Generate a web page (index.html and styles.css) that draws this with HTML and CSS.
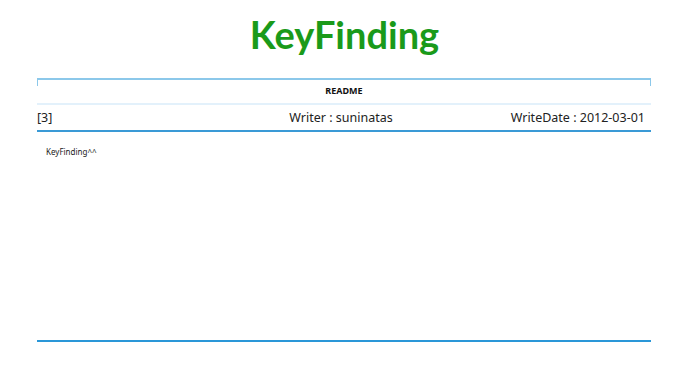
FILE: index.html
```html
<!DOCTYPE html>
<html lang="ko">
<head>
    <meta charset="UTF-8">
    <title>KeyFinding</title>
    <link rel="stylesheet" href="styles.css">
</head>
<body>
    <h1 class="title">KeyFinding</h1>
    <div class="board">
        <div class="board-head">README</div>
        <div class="board-info">
            <span class="num">[3]</span>
            <span class="writer">Writer : suninatas</span>
            <span class="date">WriteDate : 2012-03-01</span>
        </div>
        <div class="board-body">KeyFinding^^</div>
    </div>
</body>
</html>
```

FILE: styles.css
```css
body {
    margin: 0;
    font-family: "Noto Sans", "Noto Sans CJK KR", sans-serif;
    background: #fff;
    color: #222;
}

.title {
    margin: 0;
    padding: 9px 0 0 8px;
    height: 66px;
    text-align: center;
    font-family: Lato, sans-serif;
    font-weight: bold;
    font-size: 38px;
    line-height: 50px;
    color: #1a9a1a;
    box-sizing: border-box;
}

.board {
    width: 614px;
    margin: 12px 0 0 37px;
}

.board-head {
    height: 23px;
    border-top: 2px solid #8cc8ea;
    font-size: 9px;
    font-weight: bold;
    line-height: 22px;
    text-align: center;
    color: #111;
    position: relative;
}

/* little end ticks of the top rule */
.board-head::before,
.board-head::after {
    content: "";
    position: absolute;
    top: 0;
    width: 1px;
    height: 6px;
    background: #8cc8ea;
}

.board-head::before {
    left: 0;
}

.board-head::after {
    right: 0;
}

.board-info {
    display: grid;
    grid-template-columns: 1fr auto 1fr;
    align-items: center;
    height: 25px;
    padding-right: 6px;
    border-top: 2px solid #e3f1fb;
    border-bottom: 2px solid #3a9ad6;
    font-size: 12.5px;
    color: #222;
}

.board-info .date {
    text-align: right;
}

.board-body {
    height: 210px;
    padding: 14px 0 0 9px;
    box-sizing: border-box;
    font-size: 8px;
    color: #222;
    border-bottom: 2px solid #2a97d8;
}
```
